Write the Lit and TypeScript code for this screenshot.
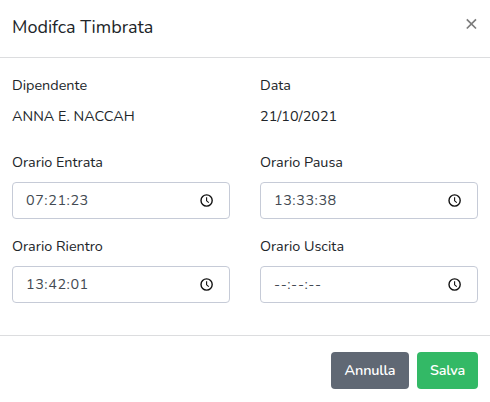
import { LitElement, html, css, svg } from "lit";
import { customElement, property } from "lit/decorators.js";

const clock = svg`<circle cx="6.6" cy="6.5" r="5.6" fill="none" stroke="#111" stroke-width="1.4"/><path d="M6.6 3.3V6.8L8.8 8.7" fill="none" stroke="#111" stroke-width="1.1"/>`;

@customElement("time-field")
class TimeField extends LitElement {
  @property() label = "";
  @property() value = "";

  static styles = css`
    :host { display: block; }
    label { display: block; height: 22px; line-height: 22px; margin-bottom: 9px; }
    .control {
      box-sizing: border-box; height: 37px; display: flex; align-items: center;
      padding: 0 15px 0 13px; border: 1px solid #c6cbd7; border-radius: 4px; background: #fff;
    }
    input {
      flex: 1; min-width: 0; padding: 0 0 2px; border: 0; outline: 0; background: none;
      font: inherit; letter-spacing: 0.55px; color: #434a52;
    }
    input.blank { letter-spacing: 0.7px; }
    svg { width: 14px; height: 14px; flex: none; }
  `;

  render() {
    return html`
      <label for="time">${this.label}</label>
      <div class="control">
        <input id="time" class=${this.value ? "" : "blank"} .value=${this.value || "--:--:--"} />
        <svg viewBox="0 0 14 14">${clock}</svg>
      </div>`;
  }
}

@customElement("app-root")
class AppRoot extends LitElement {
  static styles = css`
    :host {
      display: flex; flex-direction: column; box-sizing: border-box; width: 490px; height: 402px;
      background: #fff; color: #212529; overflow: hidden;
      font: 14.4px/22px Nunito, Lato, sans-serif;
    }
    header {
      box-sizing: border-box; height: 58px; flex: none; display: flex; justify-content: space-between;
      padding: 14px 12px 0; border-bottom: 1px solid #dcdddf;
    }
    h5 { margin: 0; font-size: 18px; line-height: 27px; font-weight: 400; }
    .close { width: 13px; height: 20px; padding: 0; border: 0; background: none; display: flex; align-items: center; }
    .close svg { width: 13px; height: 13px; }
    main { box-sizing: border-box; height: 277px; flex: none; padding: 16px 12px 0; }
    .row { display: grid; grid-template-columns: 218px 218px; gap: 30px; }
    .info { height: 77px; }
    .fields { row-gap: 16px; }
    .name { display: block; margin-bottom: 9px; }
    footer {
      box-sizing: border-box; height: 67px; flex: none; display: flex; justify-content: flex-end;
      gap: 8px; padding: 16px 12px 0; border-top: 1px solid #dcdddf;
    }
    .btn {
      height: 37px; padding: 0 0 2px; border: 0; border-radius: 4px; color: #fff;
      font: inherit; font-weight: 600; letter-spacing: -0.15px;
    }
    .cancel { width: 78px; background: #606874; }
    .save { width: 61px; background: #33b966; }
  `;

  render() {
    return html`
      <header>
        <h5>Modifca Timbrata</h5>
        <button class="close" aria-label="Chiudi">
          <svg viewBox="0 0 13 13"><path d="M1.8 1.3L11 10.5M11 1.3L1.8 10.5" stroke="#7c7c7c" stroke-width="1.7"/></svg>
        </button>
      </header>
      <main>
        <div class="row info">
          <div><span class="name">Dipendente</span><span>ANNA E. NACCAH</span></div>
          <div><span class="name">Data</span><span>21/10/2021</span></div>
        </div>
        <div class="row fields">
          <time-field label="Orario Entrata" value="07:21:23"></time-field>
          <time-field label="Orario Pausa" value="13:33:38"></time-field>
          <time-field label="Orario Rientro" value="13:42:01"></time-field>
          <time-field label="Orario Uscita"></time-field>
        </div>
      </main>
      <footer>
        <button class="btn cancel">Annulla</button>
        <button class="btn save">Salva</button>
      </footer>`;
  }
}
